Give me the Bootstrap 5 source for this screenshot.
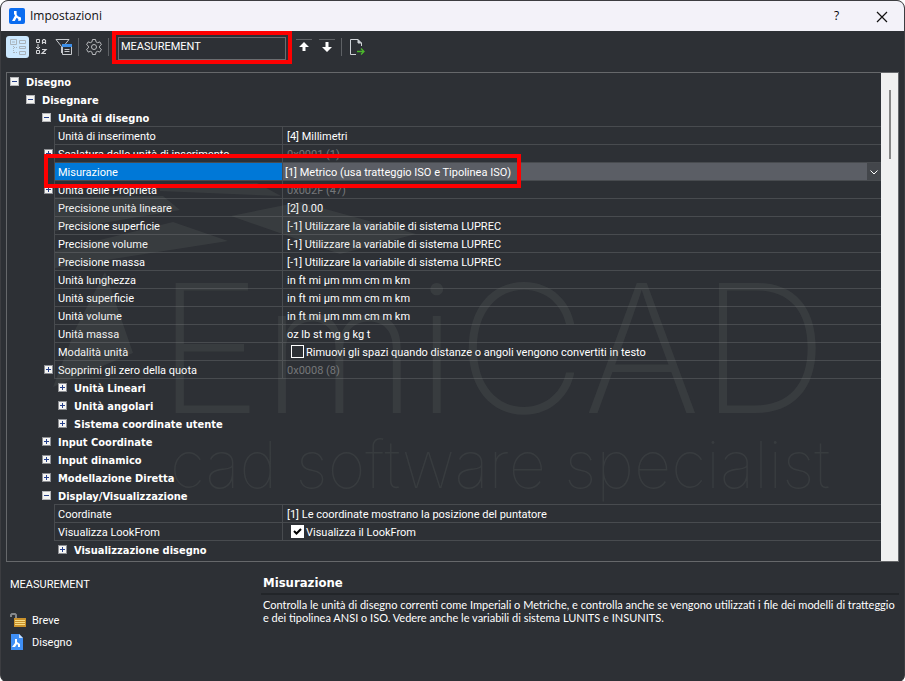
<!DOCTYPE html>
<html lang="it">
<head>
<meta charset="utf-8">
<meta name="viewport" content="width=device-width, initial-scale=1">
<title>Impostazioni</title>
<link href="https://cdn.jsdelivr.net/npm/bootstrap@5.3.0/dist/css/bootstrap.min.css" rel="stylesheet">
<style>
body { background: #fff; font-family: Roboto, "Open Sans", sans-serif; font-size: 11px; line-height: 13px; color: #fff; }
.dialog { background: #2d3035; border: 1px solid #3c3d41; border-radius: 8px; }
.titlebar { background: #f3f2f9; color: #111; height: 30px; font-family: "Open Sans", sans-serif; font-size: 12px; line-height: 16px; padding-left: 8px; }
.titlebar button { width: 45px; height: 30px; background: none; border: 0; padding: 0; }
.titlebar-text { padding-left: 5px; }
.toolbar { height: 41px; padding: 0 5px 9px 5px; }
.tool { width: 23px; height: 22px; padding: 0; border: 0; background: none; display: flex; align-items: center; justify-content: center; }
.tool.active { background: #cce8ff; border-radius: 3px; }
.divider { width: 1px; height: 18px; margin: 0 3px; background: #5e6165; }
.search-mark { border: 4px solid #f00; padding: 2px; width: 180px; height: 33px; }
.search-mark input { width: 100%; height: 23px; background: #2d3035; border: 1px solid #6a6c70; color: #fff; padding: 0 2px 4px; outline: 0; }
.grid-box { margin: 0 5px; border: 1px solid #66686b; }
.settings { width: 100%; table-layout: fixed; border-collapse: separate; border-spacing: 0; margin-bottom: 2px; }
.settings td, .settings th { height: 18px; padding: 0; line-height: 15px; white-space: nowrap; }
.settings .opens th { height: 17px; }
.settings .gutter { vertical-align: top; }
.settings .label { border-left: 1px solid #484b4f; border-bottom: 1px solid #484b4f; padding: 2px 0 0 3px; font-weight: normal; position: relative; }
.settings .value { border-left: 1px solid #484b4f; border-bottom: 1px solid #484b4f; padding: 2px 0 0 4px; }
.settings .first > .label, .settings .first > .value { border-top: 1px solid #484b4f; height: 19px; }
.settings .muted { color: #75777a; }
.cat, .info h2 { font-family: "DejaVu Sans Condensed", "DejaVu Sans", sans-serif; font-weight: bold; }
.cat { display: flex; align-items: flex-start; gap: 7px; height: 18px; line-height: 20px; padding-left: 3px; }
.opens .cat { height: 17px; }
.d1 { padding-left: 19px; }
.d2 { padding-left: 35px; }
.d3 { padding-left: 51px; }
.expander { width: 9px; height: 9px; margin-top: 4px; padding: 0; border: 0; background: none; display: block; }
.gutter .expander { margin-left: 37px; }
.settings .selected .label { background: #0078d7; }
.settings .selected .value { padding: 0; background: #5b5e65; position: relative; }
.selected select { appearance: none; display: block; width: 100%; height: 17px; border: 0; padding: 2px 16px 0 2px; background: transparent; color: #fff; outline: 0; }
.arrow { width: 14px; height: 17px; padding-top: 2px; background: #43464b; pointer-events: none; right: 0; top: 0; }
.row-mark { left: -11px; top: -9px; width: 477px; height: 34px; border: 4px solid #f00; z-index: 3; }
.check { display: flex; align-items: center; gap: 2px; padding-left: 4px; }
.check input { appearance: none; width: 13px; height: 13px; margin: 0 0 2px; border: 1px solid #fff; background: transparent; }
.check input:checked { background: #fff url("data:image/svg+xml,%3Csvg xmlns='http://www.w3.org/2000/svg' viewBox='0 0 11 11'%3E%3Cpath d='M2 5l2.500 2.500L9 3' fill='none' stroke='%23000' stroke-width='2'/%3E%3C/svg%3E"); }
.scrollbar { width: 17px; background: #f0f0f0; padding: 17px 7px 0 8px; }
.thumb { height: 69px; background: #868686; }
.watermark { z-index: 2; pointer-events: none; fill: #8b918b; fill-opacity: .12; }
.wm-name { font: 200 178px Inter, sans-serif; }
.wm-tag { font: 100 65px Inter, sans-serif; }
.info { padding: 11px 5px 29px 9px; min-height: 118px; }
.info-left { width: 251px; }
.info-line { display: flex; align-items: center; gap: 6px; height: 22px; }
.info-name { margin-bottom: 14px; }
.info h2 { font-size: 13px; line-height: 20px; margin: 0; padding-left: 2px; border-bottom: 2px solid #222529; }
.info p { margin: 0; padding: 3px 0 0 2px; font-family: Lato, sans-serif; }
</style>
<script src="https://cdn.jsdelivr.net/npm/bootstrap@5.3.0/dist/js/bootstrap.bundle.min.js"></script>
</head>
<body>
<svg class="d-none" aria-hidden="true">
  <symbol id="plus" viewBox="0 0 9 9"><rect width="9" height="9" fill="#8d8f94"/><rect x="1" y="1" width="7" height="7" fill="#f5f5f3"/><path d="M2 4.500H7M4.500 2V7" stroke="#26408a"/></symbol>
  <symbol id="minus" viewBox="0 0 9 9"><rect width="9" height="9" fill="#b5b6b9"/><rect x="1" y="1" width="7" height="7" fill="#f5f5f3"/><path d="M2 4.500H7" stroke="#26408a"/></symbol>
</svg>
<main class="dialog min-vh-100 overflow-hidden d-flex flex-column">
  <header class="titlebar d-flex align-items-center">
    <svg width="16" height="16" viewBox="0 0 16 16" aria-hidden="true"><rect width="16" height="16" rx="2" fill="#0a6cf0"/><path d="M5 3h2.600v3.500L8.800 8.200 12 9.600V12.600L9.300 13V11L7.600 9.800 5.800 13H3L6 7.500 5 6z" fill="#fff"/></svg>
    <span class="titlebar-text flex-grow-1">Impostazioni</span>
    <button type="button" aria-label="Guida">?</button>
    <button type="button" aria-label="Chiudi"><svg width="12" height="12" viewBox="0 0 12 12"><path d="M1 1l10 10M11 1L1 11" stroke="#111" stroke-width="1.200"/></svg></button>
  </header>
  <div class="toolbar d-flex align-items-center">
    <button type="button" class="tool active" aria-label="Categorie"><svg width="18" height="18" viewBox="0 0 18 18" fill="none" stroke="#a9b3bc"><path d="M1.500 1.500h6v5h-6zM3 4h3M10.500 2.500h6v3h-6zM10.500 8.500h6v2h-6zM10.500 13.500h6v3h-6z"/><path d="M4.500 8v7M5 9.500h4M5 14.500h4" stroke-dasharray="1 1"/></svg></button>
    <button type="button" class="tool" aria-label="Ordine alfabetico"><svg width="14" height="18" viewBox="0 0 14 18" fill="none" stroke="#d4d5d8"><path d="M2.500 1.500h3v3h-3zM2.500 12.500h3v3h-3zM4 6v5M2 9l2 2 2-2"/><path d="M8.500 6V2.500l1-1h1l1 1V6M8.500 4.500h3M8 11.500h4l-4 4h4" stroke-width="1.200"/></svg></button>
    <button type="button" class="tool" aria-label="Filtro"><svg width="18" height="18" viewBox="0 0 18 18" fill="none" stroke="#c6c9cd"><path d="M6.500 15V8.500L1 1.500h13L10 6.500"/><path d="M7.500 7.500h9v9h-9zM9.500 11.500h5M9.500 13.500h5"/><path d="M7 7.500h10" stroke="#3d8fe8" stroke-width="3"/></svg></button>
    <span class="divider"></span>
    <button type="button" class="tool" aria-label="Impostazioni"><svg width="18" height="18" viewBox="0 0 18 18" fill="none" stroke="#b9bbbe"><path d="M7.500 1.500h3l.5 2.300 1.600.9 2.200-.8 1.600 2.700-1.800 1.500v1.800l1.800 1.500-1.600 2.700-2.200-.8-1.600.9-.5 2.300h-3L7 14.200l-1.600-.9-2.200.8-1.600-2.700 1.800-1.500V8.100L1.600 6.600l1.600-2.700 2.200.8L7 3.800z"/><circle cx="9" cy="9" r="2.500"/></svg></button>
    <span class="divider"></span>
    <div class="search-mark align-self-start"><input type="text" value="MEASUREMENT" aria-label="Cerca"></div>
    <button type="button" class="tool" aria-label="Precedente"><svg width="18" height="18" viewBox="0 0 18 18"><path d="M1 1.500h16" stroke="#5e6165"/><path d="M9 4l5 5h-3.500v4h-3V9H4z" fill="#fff"/></svg></button>
    <button type="button" class="tool" aria-label="Successivo"><svg width="18" height="18" viewBox="0 0 18 18"><path d="M1 1.500h16" stroke="#5e6165"/><path d="M9 14L4 9h3.500V4h3v5H14z" fill="#fff"/></svg></button>
    <span class="divider"></span>
    <button type="button" class="tool" aria-label="Esporta"><svg width="16" height="18" viewBox="0 0 16 18" fill="none"><path d="M7 16.500H1.500v-15H9l3.500 3.500V8" stroke="#d0d3d8"/><path d="M9 1.500V5h3.500" fill="#d0d3d8" stroke="#d0d3d8"/><path d="M8 13.500h7M12 10.500l3 3-3 3" stroke="#4cb82c" stroke-width="1.300"/></svg></button>
  </div>

  <section class="grid-box d-flex position-relative" aria-label="Elenco impostazioni">
    <div class="flex-grow-1 overflow-hidden position-relative">
      <table class="settings">
        <colgroup><col style="width:47px"><col style="width:228px"><col></colgroup>
        <tbody>
        <tr><th colspan="3"><div class="cat"><button class="expander" aria-label="Comprimi"><svg class="d-block" width="9" height="9"><use href="#minus"/></svg></button>Disegno</div></th></tr>
        <tr><th colspan="3"><div class="cat d1"><button class="expander" aria-label="Comprimi"><svg class="d-block" width="9" height="9"><use href="#minus"/></svg></button>Disegnare</div></th></tr>
        <tr class="opens"><th colspan="3"><div class="cat d2"><button class="expander" aria-label="Comprimi"><svg class="d-block" width="9" height="9"><use href="#minus"/></svg></button>Unità di disegno</div></th></tr>
        <tr class="first"><td class="gutter"></td><th class="label">Unità di inserimento</th><td class="value">[4] Millimetri</td></tr>
        <tr><td class="gutter"><button class="expander" aria-label="Espandi"><svg class="d-block" width="9" height="9"><use href="#plus"/></svg></button></td><th class="label">Scalatura delle unità di inserimento</th><td class="value muted">0x0001 (1)</td></tr>
        <tr class="selected"><td class="gutter"></td><th class="label"><label for="measure">Misurazione</label><span class="row-mark position-absolute"></span></th><td class="value"><select id="measure"><option>[1] Metrico (usa tratteggio ISO e Tipolinea ISO)</option></select><span class="arrow position-absolute d-flex align-items-center justify-content-center"><svg width="8" height="5" viewBox="0 0 8 5"><path d="M.5.5L4 4 7.500.5" fill="none" stroke="#fff"/></svg></span></td></tr>
        <tr><td class="gutter"><button class="expander" aria-label="Espandi"><svg class="d-block" width="9" height="9"><use href="#plus"/></svg></button></td><th class="label">Unità delle Proprietà</th><td class="value muted">0x002F (47)</td></tr>
        <tr><td class="gutter"></td><th class="label">Precisione unità lineare</th><td class="value">[2] 0.00</td></tr>
        <tr><td class="gutter"></td><th class="label">Precisione superficie</th><td class="value">[-1] Utilizzare la variabile di sistema LUPREC</td></tr>
        <tr><td class="gutter"></td><th class="label">Precisione volume</th><td class="value">[-1] Utilizzare la variabile di sistema LUPREC</td></tr>
        <tr><td class="gutter"></td><th class="label">Precisione massa</th><td class="value">[-1] Utilizzare la variabile di sistema LUPREC</td></tr>
        <tr><td class="gutter"></td><th class="label">Unità lunghezza</th><td class="value">in ft mi µm mm cm m km</td></tr>
        <tr><td class="gutter"></td><th class="label">Unità superficie</th><td class="value">in ft mi µm mm cm m km</td></tr>
        <tr><td class="gutter"></td><th class="label">Unità volume</th><td class="value">in ft mi µm mm cm m km</td></tr>
        <tr><td class="gutter"></td><th class="label">Unità massa</th><td class="value">oz lb st mg g kg t</td></tr>
        <tr><td class="gutter"></td><th class="label">Modalità unità</th><td class="value"><label class="check"><input type="checkbox">Rimuovi gli spazi quando distanze o angoli vengono convertiti in testo</label></td></tr>
        <tr><td class="gutter"><button class="expander" aria-label="Espandi"><svg class="d-block" width="9" height="9"><use href="#plus"/></svg></button></td><th class="label">Sopprimi gli zero della quota</th><td class="value muted">0x0008 (8)</td></tr>
        <tr><th colspan="3"><div class="cat d3"><button class="expander" aria-label="Espandi"><svg class="d-block" width="9" height="9"><use href="#plus"/></svg></button>Unità Lineari</div></th></tr>
        <tr><th colspan="3"><div class="cat d3"><button class="expander" aria-label="Espandi"><svg class="d-block" width="9" height="9"><use href="#plus"/></svg></button>Unità angolari</div></th></tr>
        <tr><th colspan="3"><div class="cat d3"><button class="expander" aria-label="Espandi"><svg class="d-block" width="9" height="9"><use href="#plus"/></svg></button>Sistema coordinate utente</div></th></tr>
        <tr><th colspan="3"><div class="cat d2"><button class="expander" aria-label="Espandi"><svg class="d-block" width="9" height="9"><use href="#plus"/></svg></button>Input Coordinate</div></th></tr>
        <tr><th colspan="3"><div class="cat d2"><button class="expander" aria-label="Espandi"><svg class="d-block" width="9" height="9"><use href="#plus"/></svg></button>Input dinamico</div></th></tr>
        <tr><th colspan="3"><div class="cat d2"><button class="expander" aria-label="Espandi"><svg class="d-block" width="9" height="9"><use href="#plus"/></svg></button>Modellazione Diretta</div></th></tr>
        <tr class="opens"><th colspan="3"><div class="cat d2"><button class="expander" aria-label="Comprimi"><svg class="d-block" width="9" height="9"><use href="#minus"/></svg></button>Display/Visualizzazione</div></th></tr>
        <tr class="first"><td class="gutter"></td><th class="label">Coordinate</th><td class="value">[1] Le coordinate mostrano la posizione del puntatore</td></tr>
        <tr><td class="gutter"></td><th class="label">Visualizza LookFrom</th><td class="value"><label class="check"><input type="checkbox" checked>Visualizza il LookFrom</label></td></tr>
        <tr><th colspan="3"><div class="cat d3"><button class="expander" aria-label="Espandi"><svg class="d-block" width="9" height="9"><use href="#plus"/></svg></button>Visualizzazione disegno</div></th></tr>
        </tbody>
      </table>
      <svg class="watermark position-absolute top-0 start-0 w-100 h-100" aria-hidden="true">
        <g transform="translate(-7 -73)">
          <path d="M55 197L163 196 180 210 55 231zM160 184L257 183 281 196 160 191zM231 216L300 202 416 234 340 254zM55 251L173 222 228 241 55 268zM105 272L133 353 53 387 75 330z"/>
          <text class="wm-name" x="157" y="413">EmiCAD</text>
          <text class="wm-tag" x="170" y="488">cad software specialist</text>
        </g>
      </svg>
    </div>
    <div class="scrollbar flex-shrink-0"><div class="thumb"></div></div>
  </section>

  <footer class="info d-flex flex-grow-1">
    <div class="info-left flex-shrink-0">
      <div class="info-line info-name">MEASUREMENT</div>
      <div class="info-line"><svg width="16" height="16" viewBox="0 0 16 16"><path d="M1 5V3l1-1h3l1 1v5" fill="none" stroke="#85888b" stroke-width="2"/><rect x="4" y="6" width="12" height="9" fill="#c9912b"/><path d="M5 8.500h10M5 10.500h10M5 12.500h10" stroke="#f6dc83"/></svg>Breve</div>
      <div class="info-line"><svg width="16" height="16" viewBox="0 0 16 16"><path d="M1 0h8l4 4v12H1z" fill="#3f8ff5"/><path d="M9 0v4h4z" fill="#cfe2fb"/><path d="M5 5h2v3l3 2v3H8v-2l-1-1-2 3H2l3-4z" fill="#fff"/></svg>Disegno</div>
    </div>
    <div class="flex-grow-1">
      <h2>Misurazione</h2>
      <p>Controlla le unità di disegno correnti come Imperiali o Metriche, e controlla anche se vengono utilizzati i file dei modelli di tratteggio e dei tipolinea ANSI o ISO. Vedere anche le variabili di sistema LUNITS e INSUNITS.</p>
    </div>
  </footer>
</main>
</body>
</html>
